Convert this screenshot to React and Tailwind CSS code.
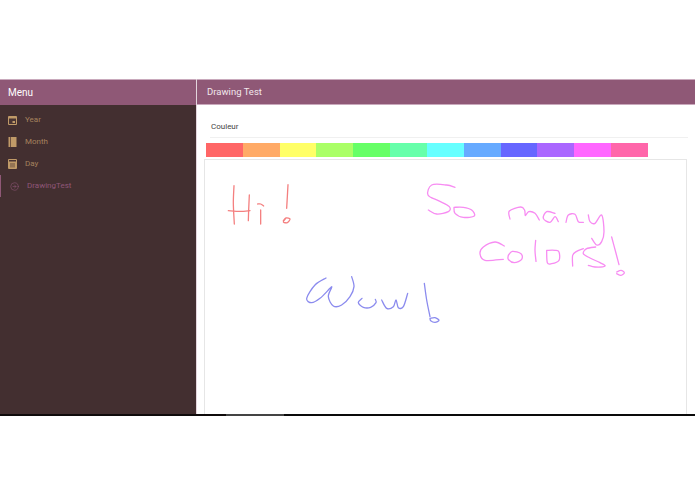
import { CircleArrowRight } from "lucide-react";

const menu = [
  { label: "Year", icon: "year" },
  { label: "Month", icon: "month" },
  { label: "Day", icon: "day" },
];

const swatches = [
  "bg-[#ff6666]",
  "bg-[#ffaa66]",
  "bg-[#ffff66]",
  "bg-[#aaff66]",
  "bg-[#66ff66]",
  "bg-[#66ffaa]",
  "bg-[#66ffff]",
  "bg-[#66aaff]",
  "bg-[#6666ff]",
  "bg-[#aa66ff]",
  "bg-[#ff66ff]",
  "bg-[#ff66aa]",
];

// strokes are noted as read off the 3x crops: [originX, originY, colour, points]
const strokes = [
  [190, 70, "#f47f7f", [[132, 347], [130, 400], [133, 462]]],
  [190, 70, "#f47f7f", [[115, 422], [150, 424], [180, 422]]],
  [190, 70, "#f47f7f", [[178, 375], [176, 420], [175, 452]]],
  [190, 70, "#f47f7f", [[203, 402], [212, 402], [221, 408]]],
  [190, 70, "#f47f7f", [[212, 420], [212, 462]]],
  [190, 70, "#f47f7f", [[294, 344], [292, 380], [290, 415]]],
  [190, 70, "#f47f7f", [[280, 452], [288, 444], [300, 447], [292, 458], [280, 456], [286, 447]]],
  [440, 70, "#f78cf2", [[45, 352], [20, 345], [-25, 345], [-36, 375], [-5, 392], [28, 410], [25, 425], [-10, 432], [-35, 420]]],
  [440, 70, "#f78cf2", [[42, 412], [45, 430], [70, 442], [103, 438], [95, 420], [70, 412], [42, 412]]],
  // many
  [500, 195, "#f78cf2", [[30, 72], [28, 48], [62, 36], [74, 46], [76, 62], [86, 50], [105, 55], [118, 75]]],
  [500, 195, "#f78cf2", [[165, 55], [140, 50], [130, 70], [150, 82], [165, 65], [175, 80]]],
  [500, 195, "#f78cf2", [[198, 82], [205, 60], [225, 58], [235, 80], [250, 82]]],
  [500, 195, "#f78cf2", [[265, 60], [270, 80], [285, 85], [305, 60], [312, 110], [305, 140], [290, 150], [275, 130]]],
  // Colors
  [475, 232, "#f78cf2", [[88, 42], [60, 30], [25, 45], [15, 65], [30, 85], [85, 82]]],
  [475, 232, "#f78cf2", [[100, 70], [112, 58], [138, 65], [140, 82], [118, 92], [100, 82], [100, 70]]],
  [475, 232, "#f78cf2", [[182, 25], [180, 55], [183, 88]]],
  [475, 232, "#f78cf2", [[215, 55], [240, 55], [252, 60], [252, 85], [230, 95], [217, 92], [215, 55]]],
  [475, 232, "#f78cf2", [[293, 102], [293, 70], [305, 58], [325, 50]]],
  [475, 232, "#f78cf2", [[362, 45], [335, 50], [325, 65], [345, 78], [375, 92], [390, 102], [360, 105], [340, 100]]],
  [475, 232, "#f78cf2", [[410, 15], [422, 60], [432, 98]]],
  [475, 232, "#f78cf2", [[425, 120], [438, 115], [448, 122], [438, 130], [425, 125]]],
  // Wow!
  [300, 270, "#8b8bee", [[78, 24], [45, 45], [20, 85], [35, 98], [60, 85], [90, 55], [95, 52], [85, 80], [100, 108], [125, 105], [150, 80], [162, 50], [155, 20]]],
  [300, 270, "#8b8bee", [[186, 85], [175, 98], [190, 112], [212, 112], [228, 98], [226, 88]]],
  [290, 265, "#8b8bee", [[275, 105], [290, 130], [310, 125], [318, 105], [325, 128], [340, 125], [353, 85]]],
  [290, 265, "#8b8bee", [[403, 55], [410, 105], [420, 155]]],
  [290, 265, "#8b8bee", [[420, 160], [435, 158], [447, 166], [435, 172], [422, 167], [420, 160]]],
];

// catmull-rom through the points, so the handwriting does not look faceted
function smooth(ox, oy, raw) {
  const p = raw.map(([x, y]) => [x / 3 + ox, y / 3 + oy]);
  let d = `M${p[0][0]} ${p[0][1]}`;
  for (let i = 0; i < p.length - 1; i++) {
    const a = p[i - 1] || p[i];
    const b = p[i];
    const c = p[i + 1];
    const e = p[i + 2] || c;
    d += ` C${b[0] + (c[0] - a[0]) / 6} ${b[1] + (c[1] - a[1]) / 6} ${c[0] - (e[0] - b[0]) / 6} ${c[1] - (e[1] - b[1]) / 6} ${c[0]} ${c[1]}`;
  }
  return d;
}

function MenuIcon({ type }) {
  if (type === "year") {
    return (
      <svg width="9" height="10" viewBox="0 0 9 10" className="shrink-0">
        <rect x="0" y="1" width="9" height="9" rx="1" fill="#c09a68" />
        <rect x="1" y="3.5" width="7" height="5.5" fill="#4a3533" />
        <rect x="4.5" y="6" width="2.5" height="2" fill="#c09a68" />
      </svg>
    );
  }
  if (type === "month") {
    return (
      <svg width="9" height="10" viewBox="0 0 9 10" className="shrink-0">
        <rect x="0.5" y="0" width="8" height="10" fill="#c09a68" />
        <rect x="2.2" y="0" width="0.8" height="10" fill="#5a4238" />
      </svg>
    );
  }
  return (
    <svg width="9" height="10" viewBox="0 0 9 10" className="shrink-0">
      <rect x="0" y="0" width="9" height="10" rx="1" fill="#c09a68" />
      <rect x="1" y="1" width="7" height="1.5" fill="#4a3533" />
      <rect x="2" y="4" width="5" height="4.5" fill="#947454" />
    </svg>
  );
}

export default function App() {
  return (
    <div className="h-[494px] w-full overflow-hidden bg-white font-['Roboto',sans-serif]">
      <div className="h-[79px]" />

      <div className="flex h-[335px]">
        {/* Sidebar */}
        <aside className="flex w-[196px] shrink-0 flex-col bg-[#432f30]">
          <div className="flex h-[26px] items-center border-t border-t-[#c9a9bc] bg-[#8f5876] px-2 text-[10px] text-white">
            Menu
          </div>
          <nav className="flex flex-col pt-1">
            {menu.map((item) => (
              <div key={item.label} className="flex h-[22px] items-center gap-2 pl-2 text-[8px] text-[#a5825e]">
                <MenuIcon type={item.icon} />
                <span>{item.label}</span>
              </div>
            ))}
            <div className="flex h-[22px] items-center gap-2 border-l border-l-[#8f5876] pl-[9px] text-[8px] text-[#8f5678]">
              <CircleArrowRight size={9} strokeWidth={1.5} className="shrink-0" />
              <span>DrawingTest</span>
            </div>
          </nav>
        </aside>

        {/* Main */}
        <main className="flex min-w-0 flex-1 flex-col border-l border-l-[#e3d5dd]">
          <div className="flex h-[26px] shrink-0 items-center border-y border-y-[#c9a9bc] bg-[#8f5876] px-[10px] text-[9.5px] text-[#f1e7ec]">
            Drawing Test
          </div>

          <div className="flex min-h-0 flex-1 flex-col pl-[7px] pr-[7px]">
            <div className="ml-[6px] flex h-[33px] shrink-0 items-center border-b border-b-[#f0f0f0] pl-px pt-[11px] text-[8px] text-[#444444]">
              Couleur
            </div>
            <div className="ml-[2px] mt-[5px] flex h-[14px] w-[442px] shrink-0">
              {swatches.map((color) => (
                <div key={color} className={`flex-1 ${color}`} />
              ))}
            </div>
            <div className="mt-[2px] min-h-0 w-[483px] flex-1 overflow-hidden border border-b-0 border-[#e6e6e6]">
              <svg viewBox="205 160 481 254" width="481" height="254" className="block" fill="none">
                {strokes.map(([ox, oy, color, points], i) => (
                  <path key={i} d={smooth(ox, oy, points)} stroke={color} strokeWidth="1.3" strokeLinecap="round" strokeLinejoin="round" />
                ))}
              </svg>
            </div>
          </div>
        </main>
      </div>

      {/* Bottom edge */}
      <div className="flex h-[2px]">
        <div className="w-[226px] bg-[#0f0b0b]" />
        <div className="w-[58px] bg-[#444444]" />
        <div className="flex-1 bg-[#0a0a0a]" />
      </div>
    </div>
  );
}
